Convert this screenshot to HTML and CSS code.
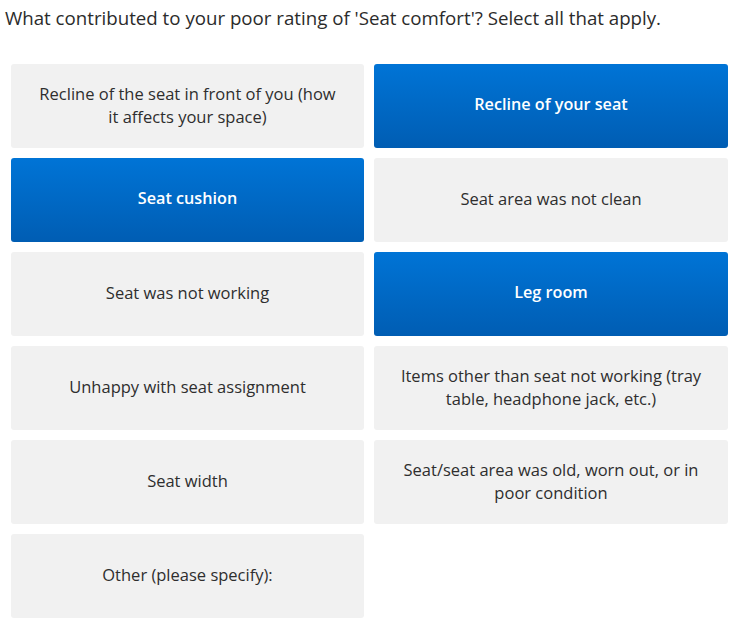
FILE: index.html
```html
<!DOCTYPE html>
<html lang="en">
<head>
  <meta charset="UTF-8">
  <meta name="viewport" content="width=device-width, initial-scale=1.0">
  <title>Seat comfort</title>
  <link rel="stylesheet" href="styles.css">
</head>
<body>
  <div class="question">
    <h2 class="question-title">What contributed to your poor rating of 'Seat comfort'? Select all that apply.</h2>

    <div class="options">
      <div class="option">Recline of the seat in front of you (how it affects your space)</div>
      <div class="option selected">Recline of your seat</div>
      <div class="option selected">Seat cushion</div>
      <div class="option">Seat area was not clean</div>
      <div class="option">Seat was not working</div>
      <div class="option selected">Leg room</div>
      <div class="option">Unhappy with seat assignment</div>
      <div class="option">Items other than seat not working (tray table, headphone jack, etc.)</div>
      <div class="option">Seat width</div>
      <div class="option">Seat/seat area was old, worn out, or in poor condition</div>
      <div class="option">Other (please specify):</div>
    </div>
  </div>
</body>
</html>
```

FILE: styles.css
```css
* {
  box-sizing: border-box;
  margin: 0;
  padding: 0;
  font-family: "Open Sans", Arial, sans-serif;
}

body {
  background-color: #fff;
  color: #333;
}

.question {
  padding: 3px 8px 0 11px;
}

.question-title {
  font-size: 18.7px;
  font-weight: normal;
  line-height: 30px;
  margin-left: -6px;
  margin-bottom: 31px;
  color: #2b2b2b;
}

.options {
  display: grid;
  grid-template-columns: 353px 354px;
  grid-auto-rows: 84px;
  gap: 10px;
}

.option {
  display: flex;
  align-items: center;
  justify-content: center;
  text-align: center;
  padding: 0 25px 3px;
  background-color: #f1f1f1;
  border-radius: 3px;
  font-size: 16.5px;
  line-height: 23px;
  color: #2e2e2e;
  cursor: pointer;
}

.option.selected {
  background: linear-gradient(to bottom, #0074d6, #005db3);
  color: #fff;
  font-size: 16.2px;
  font-weight: 600;
}
```
